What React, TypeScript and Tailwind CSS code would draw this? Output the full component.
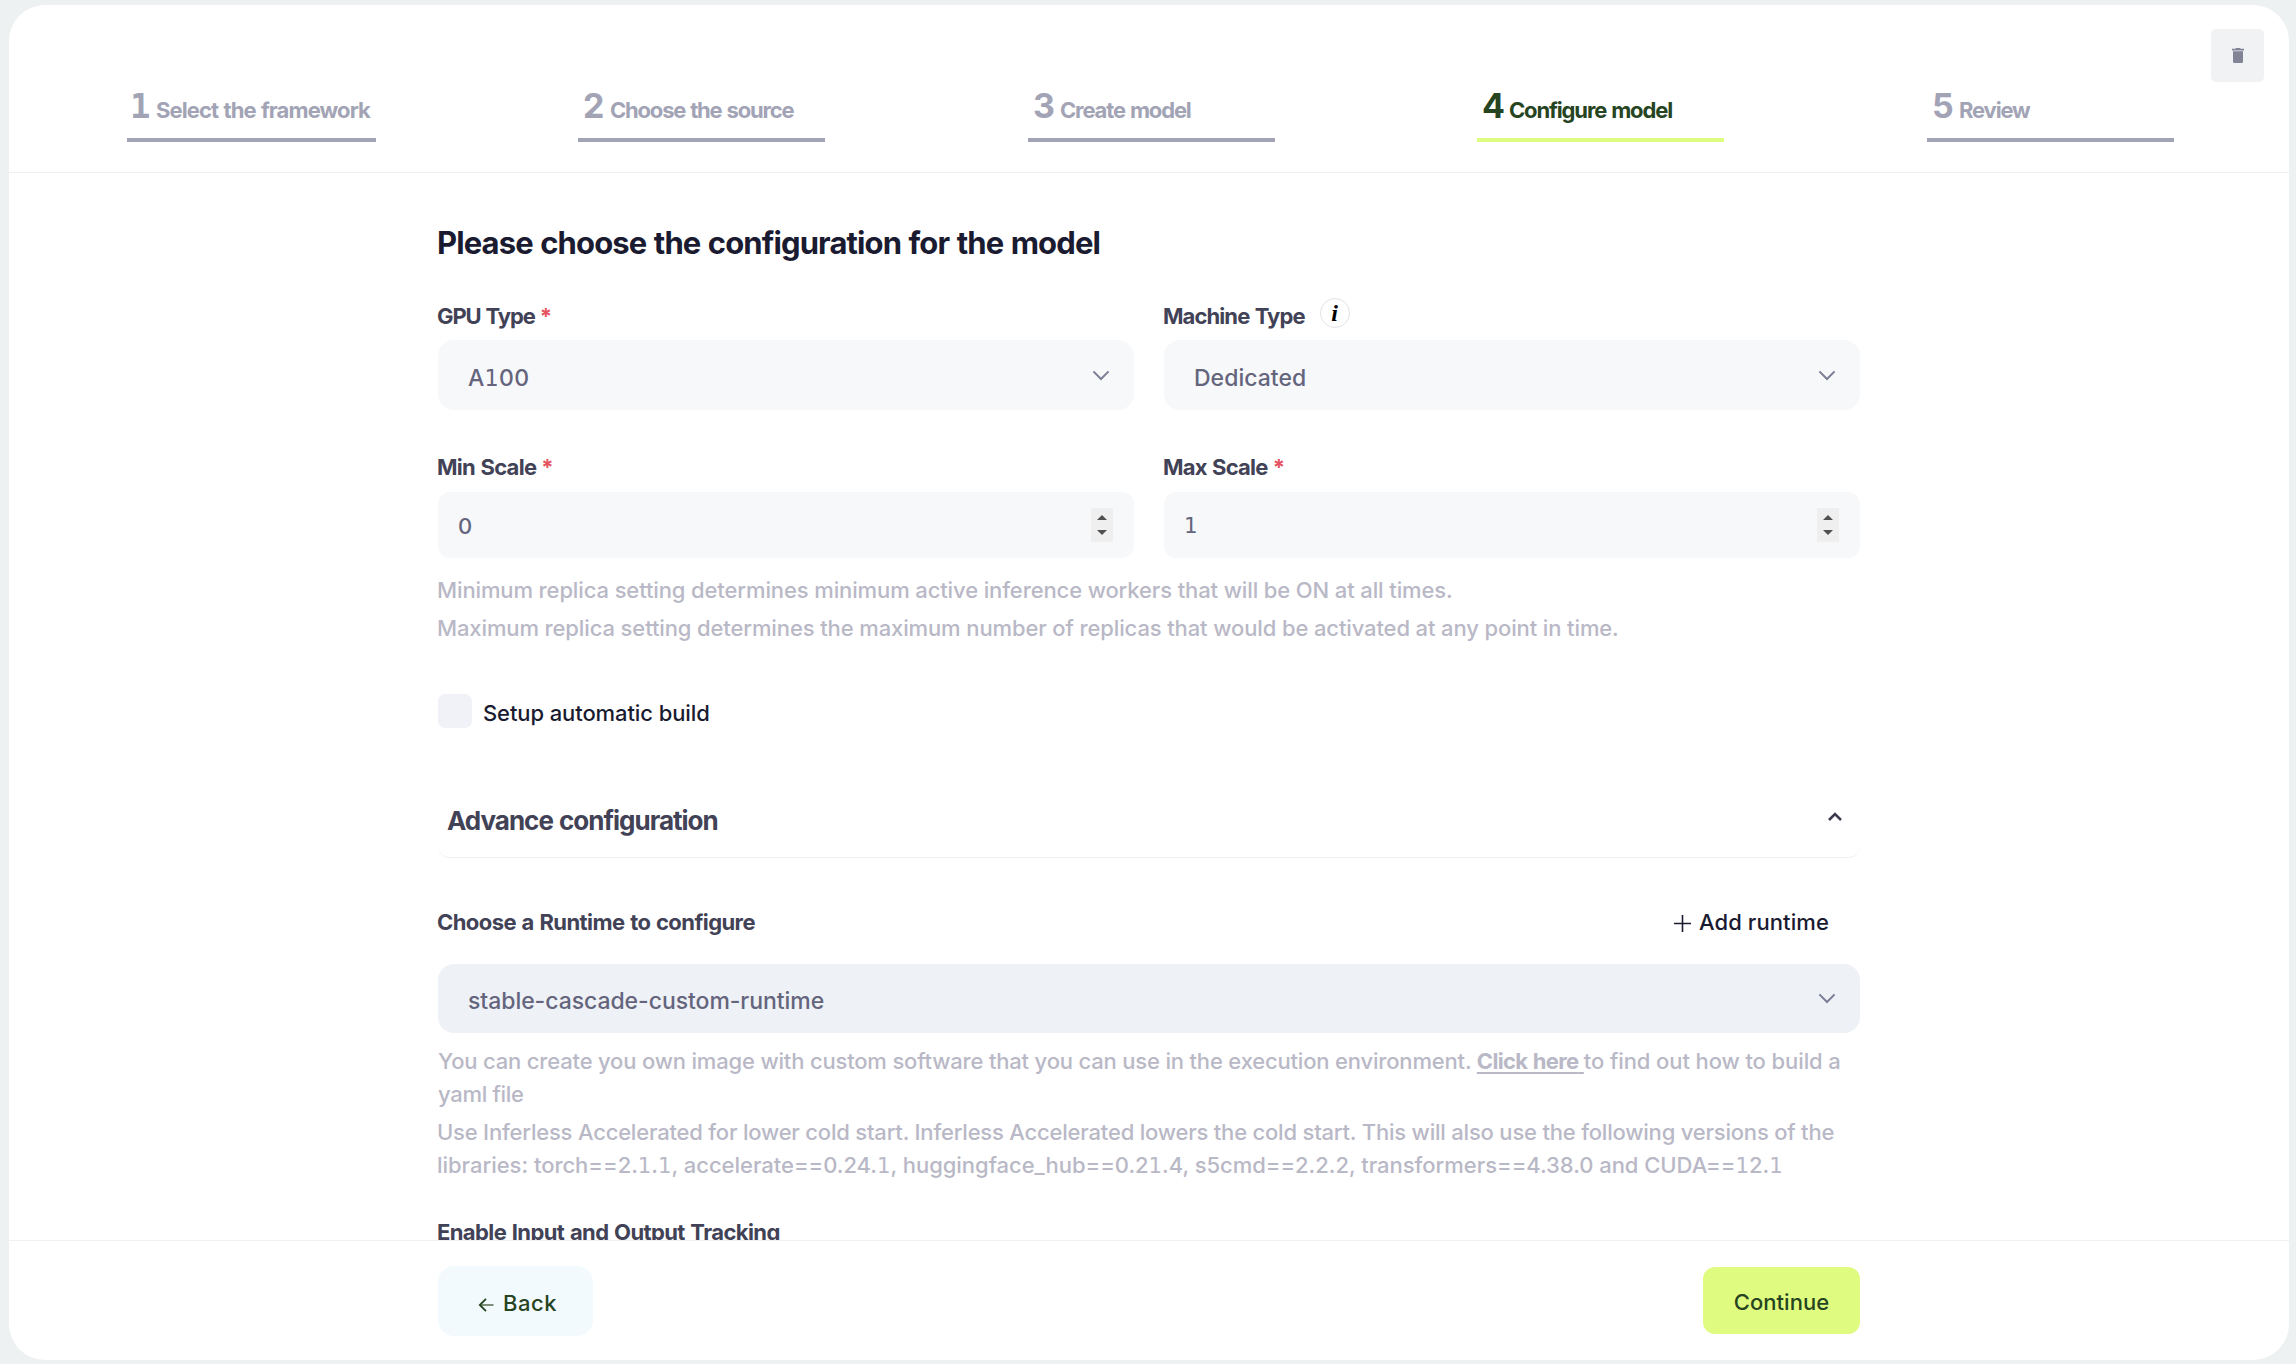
import React from "react";

/* Sets every "1" in the slab-footed form used across the interface. */
function Slab({ text }: { text: string }) {
  return (
    <>
      {text.split(/(1)/).map((part, i) =>
        part === "1" ? (
          <span key={i} className="font-['DejaVu_Sans'] text-[0.97em] font-normal">
            1
          </span>
        ) : (
          part
        ),
      )}
    </>
  );
}

type StepProps = { n: string; label: string; tracking: string; active?: boolean };

function Step({ n, label, tracking, active }: StepProps) {
  return (
    <div
      className={`flex h-[57px] items-baseline whitespace-nowrap border-b-4 pt-px pl-1 font-bold ${
        n === "1" ? "w-[249px]" : "w-[247px]"
      } ${active ? "border-[#dcfd80] text-[#26441f]" : "border-[#a2a4b6] text-[#a2a4b6]"}`}
    >
      {n === "1" ? (
        <span className="-ml-px w-[26px] shrink-0 font-['DejaVu_Sans_Mono'] text-[34px] leading-10">1</span>
      ) : (
        <span className="ml-px w-[27px] shrink-0 text-[34px] leading-10">{n}</span>
      )}
      <span className={`text-[22px] leading-10 [word-spacing:1px] ${tracking}`}>{label}</span>
    </div>
  );
}

function ChevronDown() {
  return (
    <svg className="h-[11px] w-[18px]" viewBox="0 0 18 11" fill="none" stroke="#7c7e95" strokeWidth="2">
      <path d="M1.4 1.4 9 9l7.6-7.6" />
    </svg>
  );
}

function Select({ value, tracking, className }: { value: string; tracking: string; className: string }) {
  return (
    <div className={`flex items-center justify-between rounded-2xl pr-6 pl-[30px] ${className}`}>
      <span className={`pt-[5px] text-[23px] leading-8 font-medium text-[#64657d] ${tracking}`}>
        <Slab text={value} />
      </span>
      <ChevronDown />
    </div>
  );
}

function NumberField({ value }: { value: string }) {
  return (
    <div className="flex h-[66px] items-center justify-between rounded-xl bg-[#f7f8fa] pr-[21px] pl-5">
      <span className="pt-px text-[22px] leading-8 font-medium text-[#64657d]">
        <Slab text={value} />
      </span>
      <span className="flex h-[34px] w-[22px] flex-col items-center justify-between bg-[#efefef] py-[7px]">
        <svg className="h-[5px] w-[10px]" viewBox="0 0 10 5" fill="#505050">
          <path d="M0 5 5 0l5 5z" />
        </svg>
        <svg className="h-[5px] w-[10px]" viewBox="0 0 10 5" fill="#505050">
          <path d="m0 0 5 5 5-5z" />
        </svg>
      </span>
    </div>
  );
}

function Label({ text, tracking, required }: { text: string; tracking: string; required?: boolean }) {
  return (
    <span
      className={`-ml-px text-[22px] leading-[30px] font-bold whitespace-nowrap text-[#424257] [word-spacing:1px] ${tracking}`}
    >
      {text}
      {required && <span className="ml-[5px] text-[#e5535f]">*</span>}
    </span>
  );
}

export default function App() {
  return (
    <div className="flex h-[1364px] w-[2296px] bg-[#eef1f2] pt-[5px] pr-[7px] pb-1 pl-[9px] font-['Inter',sans-serif]">
      <div className="relative flex w-[2280px] flex-col overflow-hidden rounded-[36px] bg-white">
        <button className="absolute top-6 right-[25px] flex size-[53px] items-center justify-center rounded-[5px] bg-[#f1f2f4]">
          <svg className="h-[15px] w-[12px]" viewBox="0 0 12 15" fill="#828397">
            <path d="M4 0h4l.6.8H12v1.8H0V.8h3.400z" />
            <path d="M1 3.200h10v10.300q0 1.500-1.500 1.500h-7Q1 15 1 13.500z" />
          </svg>
        </button>

        <header className="grid h-[168px] shrink-0 grid-cols-[repeat(5,450px)] border-b border-[#eff1f4] pt-20 pl-[118px]">
          <Step n="1" label="Select the framework" tracking="tracking-[-0.9px]" />
          <div className="pl-px">
            <Step n="2" label="Choose the source" tracking="tracking-[-1.2px]" />
          </div>
          <div className="pl-px">
            <Step n="3" label="Create model" tracking="tracking-[-1.15px]" />
          </div>
          <Step n="4" label="Configure model" tracking="tracking-[-1.15px]" active />
          <Step n="5" label="Review" tracking="tracking-[-1.15px]" />
        </header>

        <main className="flex min-h-0 flex-1 flex-col overflow-hidden">
          <div className="mx-auto w-[1422px] shrink-0 pt-[50px]">
            <h1 className="-ml-px text-[31px] leading-10 font-bold tracking-[-0.88px] text-[#1a1b30] [word-spacing:1px]">
              Please choose the configuration for the model
            </h1>

            <div className="mt-[38px] grid grid-cols-[696px_696px] gap-x-[30px]">
              <div className="flex flex-col">
                <Label text="GPU Type" tracking="tracking-[-1.12px]" required />
                <Select value="A100" tracking="tracking-[0.3px]" className="mt-[9px] h-[70px] bg-[#f7f8fa]" />
              </div>
              <div className="flex flex-col">
                <div className="flex h-[30px] items-center">
                  <Label text="Machine Type" tracking="tracking-[-0.9px]" />
                  <span className="-mt-[7px] ml-[15px] flex size-[30px] items-center justify-center rounded-full border border-[#e2e2e8] bg-white font-['Liberation_Serif'] text-[24px] leading-none font-bold text-black italic">
                    i
                  </span>
                </div>
                <Select value="Dedicated" tracking="tracking-[0.02px]" className="mt-[9px] h-[70px] bg-[#f7f8fa]" />
              </div>
            </div>

            <div className="mt-[42px] grid grid-cols-[696px_696px] gap-x-[30px]">
              <div className="flex flex-col gap-2.5">
                <Label text="Min Scale" tracking="tracking-[-0.72px]" required />
                <NumberField value="0" />
              </div>
              <div className="flex flex-col gap-2.5">
                <Label text="Max Scale" tracking="tracking-[-0.78px]" required />
                <NumberField value="1" />
              </div>
            </div>

            <div className="mt-4 -ml-px flex flex-col gap-1.5 text-[22px] leading-8 font-medium tracking-[-0.12px] whitespace-nowrap text-[#b9b8c6]">
              <p>Minimum replica setting determines minimum active inference workers that will be ON at all times.</p>
              <p>
                Maximum replica setting determines the maximum number of replicas that would be activated at any point in
                time.
              </p>
            </div>

            <label className="mt-[50px] flex h-[34px] items-center gap-[11px]">
              <span className="size-[34px] rounded-[7px] bg-[#f1f2f7]" />
              <span className="pt-1 text-[22px] leading-8 font-medium tracking-[-0.1px] text-[#1a1b30]">
                Setup automatic build
              </span>
            </label>

            <div className="mt-14 flex h-[74px] items-center justify-between rounded-b-xl border-b border-[#eff0f3] pr-[18px] pl-[9px]">
              <h2 className="text-[26px] leading-8 font-bold tracking-[-1px] text-[#424257] [word-spacing:1px]">
                Advance configuration
              </h2>
              <svg className="-mt-2 h-[9px] w-[14px]" viewBox="0 0 14 9" fill="none" stroke="#3c3c4e" strokeWidth="2.600">
                <path d="m1 8 6-6 6 6" />
              </svg>
            </div>

            <div className="mt-[49px] flex h-[30px] items-center justify-between pr-[31px]">
              <Label text="Choose a Runtime to configure" tracking="tracking-[-0.57px]" />
              <button className="flex items-center gap-2 text-[22px] leading-[30px] font-medium tracking-[0.1px] text-[#1a1b30]">
                <svg className="mt-0.5 size-[17px]" viewBox="0 0 17 17" stroke="#1a1b30" strokeWidth="1.600">
                  <path d="M8.500 0v17M0 8.500h17" />
                </svg>
                Add runtime
              </button>
            </div>
            <Select
              value="stable-cascade-custom-runtime"
              tracking="tracking-[-0.05px]"
              className="mt-[27px] h-[69px] bg-[#eef1f6]"
            />

            <div className="mt-3 flex flex-col gap-[5px] text-[22px] leading-[33px] font-medium whitespace-nowrap text-[#b9b8c6]">
              <p>
                <span className="tracking-[-0.18px]">
                  You can create you own image with custom software that you can use in the execution environment.{" "}
                </span>
                <a className="font-bold tracking-[-0.7px] underline decoration-2 underline-offset-[3px] [word-spacing:1px]">
                  Click here{"\u00a0"}
                </a>
                <span className="tracking-[-0.1px]">to find out how to build a</span>
                <br />
                <span className="tracking-[-0.3px]">yaml file</span>
              </p>
              <p className="-ml-px">
                <span className="tracking-[-0.2px]">
                  Use Inferless Accelerated for lower cold start. Inferless Accelerated lowers the cold start. This will
                  also use the following versions of the
                </span>
                <br />
                <span className="tracking-[-0.03px]">
                  <Slab text="libraries: torch==2.1.1, accelerate==0.24.1, huggingface_hub==0.21.4, s5cmd==2.2.2, transformers==4.38.0 and CUDA==12.1" />
                </span>
              </p>
            </div>

            <div className="mt-[35px]">
              <Label text="Enable Input and Output Tracking" tracking="tracking-[-0.6px]" />
            </div>
          </div>
        </main>

        <footer className="h-[120px] shrink-0 border-t border-[#eff1f4]">
          <div className="mx-auto flex h-[119px] w-[1422px] items-start justify-between pt-[25px] text-[22px] leading-8 font-medium text-[#26441f]">
            <button className="flex h-[70px] w-[155px] items-center rounded-2xl bg-[#f2fafe] pt-1 pl-10">
              <svg className="mt-[3px] h-[14px] w-[16px]" viewBox="0 0 16 14" fill="none" stroke="#26441f" strokeWidth="1.800">
                <path d="M8 .8 1.800 7 8 13.200" />
                <path d="M2 7h13.500" strokeOpacity=".65" />
              </svg>
              <span className="ml-[9px] tracking-[0.5px]">Back</span>
            </button>
            <button className="mt-px h-[67px] w-[157px] rounded-xl bg-[#dffc80] pt-[3px] tracking-[0.05px]">
              Continue
            </button>
          </div>
        </footer>
      </div>
    </div>
  );
}
